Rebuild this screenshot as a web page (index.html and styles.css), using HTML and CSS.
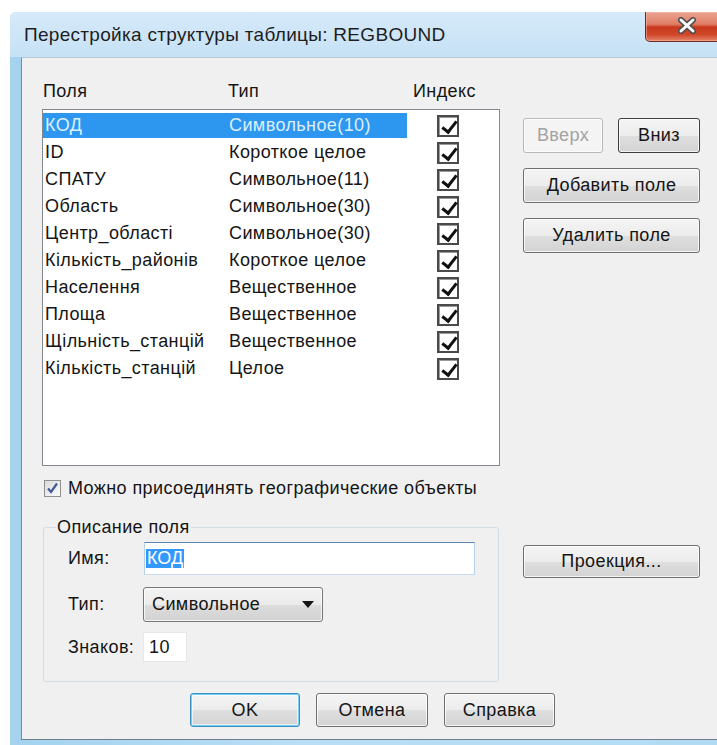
FILE: index.html
```html
<!DOCTYPE html>
<html lang="ru">
<head>
<meta charset="utf-8">
<title>Перестройка структуры таблицы</title>
<link rel="stylesheet" href="styles.css">
</head>
<body>
<div class="window">
  <div class="titlebar">
    <span class="title">Перестройка структуры таблицы: REGBOUND</span>
    <button class="close" aria-label="Закрыть">
      <svg width="22" height="17" viewBox="0 0 22 17">
        <path d="M5 3 L17 14 M17 3 L5 14" stroke="#4e4e4e" stroke-width="6" stroke-linecap="round"/>
        <path d="M5 3 L17 14 M17 3 L5 14" stroke="#fbfbfb" stroke-width="3" stroke-linecap="round"/>
      </svg>
    </button>
  </div>

  <div class="client">
    <div class="main">
      <div class="left">
        <div class="cols-head">
          <span class="h-name">Поля</span>
          <span class="h-type">Тип</span>
          <span>Индекс</span>
        </div>

        <div class="listbox">
          <div class="row sel"><div class="cells"><span class="n">КОД</span><span>Символьное(10)</span></div><span class="chk"></span></div>
          <div class="row"><div class="cells"><span class="n">ID</span><span>Короткое целое</span></div><span class="chk"></span></div>
          <div class="row"><div class="cells"><span class="n">СПАТУ</span><span>Символьное(11)</span></div><span class="chk"></span></div>
          <div class="row"><div class="cells"><span class="n">Область</span><span>Символьное(30)</span></div><span class="chk"></span></div>
          <div class="row"><div class="cells"><span class="n">Центр_області</span><span>Символьное(30)</span></div><span class="chk"></span></div>
          <div class="row"><div class="cells"><span class="n">Кількість_районів</span><span>Короткое целое</span></div><span class="chk"></span></div>
          <div class="row"><div class="cells"><span class="n">Населення</span><span>Вещественное</span></div><span class="chk"></span></div>
          <div class="row"><div class="cells"><span class="n">Площа</span><span>Вещественное</span></div><span class="chk"></span></div>
          <div class="row"><div class="cells"><span class="n">Щільність_станцій</span><span>Вещественное</span></div><span class="chk"></span></div>
          <div class="row"><div class="cells"><span class="n">Кількість_станцій</span><span>Целое</span></div><span class="chk"></span></div>
        </div>

        <label class="geo">
          <span class="cb">
            <svg width="17" height="17" viewBox="0 0 17 17">
              <path d="M4 8.5 L7 12 L13 3.5" fill="none" stroke="#3d5a9a" stroke-width="2.2"/>
            </svg>
          </span>
          Можно присоединять географические объекты
        </label>

        <fieldset class="group">
          <legend>Описание поля</legend>
          <div class="frow">
            <span class="flabel">Имя:</span>
            <div class="edit name"><span class="selected-text">КОД</span></div>
          </div>
          <div class="frow r2">
            <span class="flabel">Тип:</span>
            <div class="combo">
              <span>Символьное</span>
              <svg width="12" height="7" viewBox="0 0 12 7"><path d="M0 0 H12 L6 7 Z" fill="#151515"/></svg>
            </div>
          </div>
          <div class="frow r3">
            <span class="flabel">Знаков:</span>
            <div class="edit small">10</div>
          </div>
        </fieldset>
      </div>

      <div class="right">
        <div class="pair">
          <button class="btn up" disabled>Вверх</button>
          <button class="btn down">Вниз</button>
        </div>
        <button class="btn">Добавить поле</button>
        <button class="btn">Удалить поле</button>
        <button class="btn proj">Проекция...</button>
      </div>
    </div>

    <div class="actions">
      <button class="btn ok">OK</button>
      <button class="btn cancel">Отмена</button>
      <button class="btn help">Справка</button>
    </div>
  </div>
</div>
</body>
</html>
```

FILE: styles.css
```css
* { box-sizing: border-box; }

html, body { margin: 0; padding: 0; }

body {
  width: 717px;
  height: 745px;
  overflow: hidden;
  background: #fff;
  font-family: "Liberation Sans", Arial, sans-serif;
  font-size: 18px;
  letter-spacing: 0.4px;
  color: #151515;
}

/* window frame */
.window {
  margin: 12px 0 0 10px;
  width: 724px;
  padding-bottom: 6px;
  background: linear-gradient(90deg, #a4d2ef, #b9def5 40%, #b2dbf3);
  border-top-left-radius: 6px;
}

.titlebar {
  height: 45px;
  display: flex;
  align-items: center;
  padding: 0 13px 0 14px;
  background: linear-gradient(#d6eafa, #c6e1f5);
  border-top-left-radius: 6px;
}

.title {
  flex: 1;
  font-size: 19px;
  letter-spacing: 0.3px;
  color: #1e1e1e;
}

.close {
  align-self: flex-start;
  width: 76px;
  height: 30px;
  padding: 0 0 2px 8px;
  display: flex;
  align-items: center;
  justify-content: center;
  border: 1px solid #6a2b21;
  border-top: none;
  border-radius: 0 0 5px 5px;
  background: linear-gradient(#eaa392 0%, #df7e66 42%, #c9381d 52%, #cf4829 78%, #e5846a 100%);
  box-shadow: inset 0 0 0 1px rgba(255, 200, 180, 0.45);
}

/* client area */
.client {
  margin-left: 11px;
  background: #f0f0f0;
  border-left: 1px solid #7b8b97;
  border-top: 1px solid #b7c8d5;
  border-bottom: 1px solid #6e7f8c;
  padding: 23px 0 12px 0;
}

.main {
  display: flex;
  align-items: flex-start;
}

.left {
  margin-left: 20px;
  width: 458px;
}

.cols-head {
  display: flex;
  height: 21px;
  line-height: 21px;
  padding-left: 1px;
}

.h-name, .h-type { width: 185px; }

.listbox {
  margin-top: 7px;
  height: 357px;
  border: 1px solid #828790;
  background: #fff;
  padding-top: 2px;
}

.row {
  display: flex;
  align-items: center;
  height: 27px;
}

.cells {
  display: flex;
  width: 364px;
  height: 25px;
  line-height: 25px;
  white-space: nowrap;
}

.cells .n {
  width: 186px;
  padding-left: 2px;
}

.row.sel .cells {
  background: #2d97ef;
  color: #dcefff;
}

/* classic index checkbox */
.chk {
  position: relative;
  margin-left: 30px;
  width: 22px;
  height: 22px;
  border: 2px solid #4a4a4a;
  background: #fff;
  box-shadow: inset 1px 1px 0 #9a9a9a;
}

.chk::after {
  content: "";
  position: absolute;
  left: 6px;
  top: 1px;
  width: 6px;
  height: 12px;
  border: solid #111;
  border-width: 0 3px 3px 0;
  transform: rotate(38deg);
}

.geo {
  display: flex;
  align-items: center;
  margin-top: 12px;
  height: 21px;
  line-height: 21px;
}

.cb {
  display: block;
  width: 17px;
  height: 17px;
  margin: 0 7px 0 2px;
  border: 1px solid #8e8f8f;
  background: linear-gradient(135deg, #dcdcdc, #fafafa);
}

.cb svg { display: block; margin: -1px 0 0 -1px; }

/* field description group */
.group {
  margin: 18px 1px 0 1px;
  padding: 5px 12px 19px 12px;
  border: 1px solid #d3dde3;
  border-radius: 3px;
  min-width: 0;
}

.group legend {
  padding: 0 1px;
  line-height: 20px;
  font-size: 18px;
}

.frow {
  display: flex;
  align-items: center;
  margin-left: 12px;
}

.frow.r2 { margin-top: 12px; }
.frow.r3 { margin-top: 10px; }

.flabel { width: 75px; }

.edit {
  background: #fff;
  display: flex;
  align-items: center;
}

.edit.name {
  margin-left: 1px;
  width: 331px;
  height: 33px;
  padding-left: 1px;
  border: 1px solid;
  border-color: #5b86ad #b8d0e6 #c9dcee #b8d0e6;
}

.selected-text {
  background: #3399ff;
  color: #fff;
  line-height: 19px;
  padding: 0 1px;
  letter-spacing: 0;
}

.edit.small {
  width: 44px;
  height: 30px;
  padding-left: 5px;
  border: 1px solid #e8e8e8;
}

.combo {
  width: 180px;
  height: 35px;
  display: flex;
  align-items: center;
  justify-content: space-between;
  padding: 0 8px;
  border: 1px solid #767676;
  border-radius: 3px;
  background: linear-gradient(#f3f3f3 0%, #ebebeb 50%, #dddddd 51%, #d2d2d2 100%);
  box-shadow: inset 0 0 0 1px rgba(255, 255, 255, 0.75);
}

/* push buttons */
.btn {
  font-family: "Liberation Sans", Arial, sans-serif;
  font-size: 18px;
  letter-spacing: 0.4px;
  color: #151515;
  height: 35px;
  padding: 0;
  border: 1px solid #707070;
  border-radius: 3px;
  background: linear-gradient(#f4f4f4 0%, #ececec 50%, #dfdfdf 51%, #d3d3d3 100%);
  box-shadow: inset 0 0 0 1px rgba(255, 255, 255, 0.75);
}

.right {
  margin-left: 23px;
  margin-top: 37px;
  width: 177px;
  display: flex;
  flex-direction: column;
  gap: 15px;
}

.pair {
  display: flex;
  justify-content: space-between;
}

.btn.up {
  width: 80px;
  color: #a3a3a3;
  border-color: #b6b9bb;
  background: #f4f4f4;
}

.btn.down {
  width: 82px;
  border-color: #3d3d3d;
}

.btn.proj {
  margin-top: 277px;
  height: 33px;
}

.actions {
  display: flex;
  gap: 16px;
  margin: 11px 0 0 168px;
}

.actions .btn { height: 34px; }
.btn.ok {
  width: 110px;
  border-color: #3a8fc4;
  box-shadow: inset 0 0 0 1px #6fd0f2, inset 0 0 0 2px rgba(255, 255, 255, 0.6);
}
.btn.cancel { width: 112px; }
.btn.help { width: 111px; }
```
